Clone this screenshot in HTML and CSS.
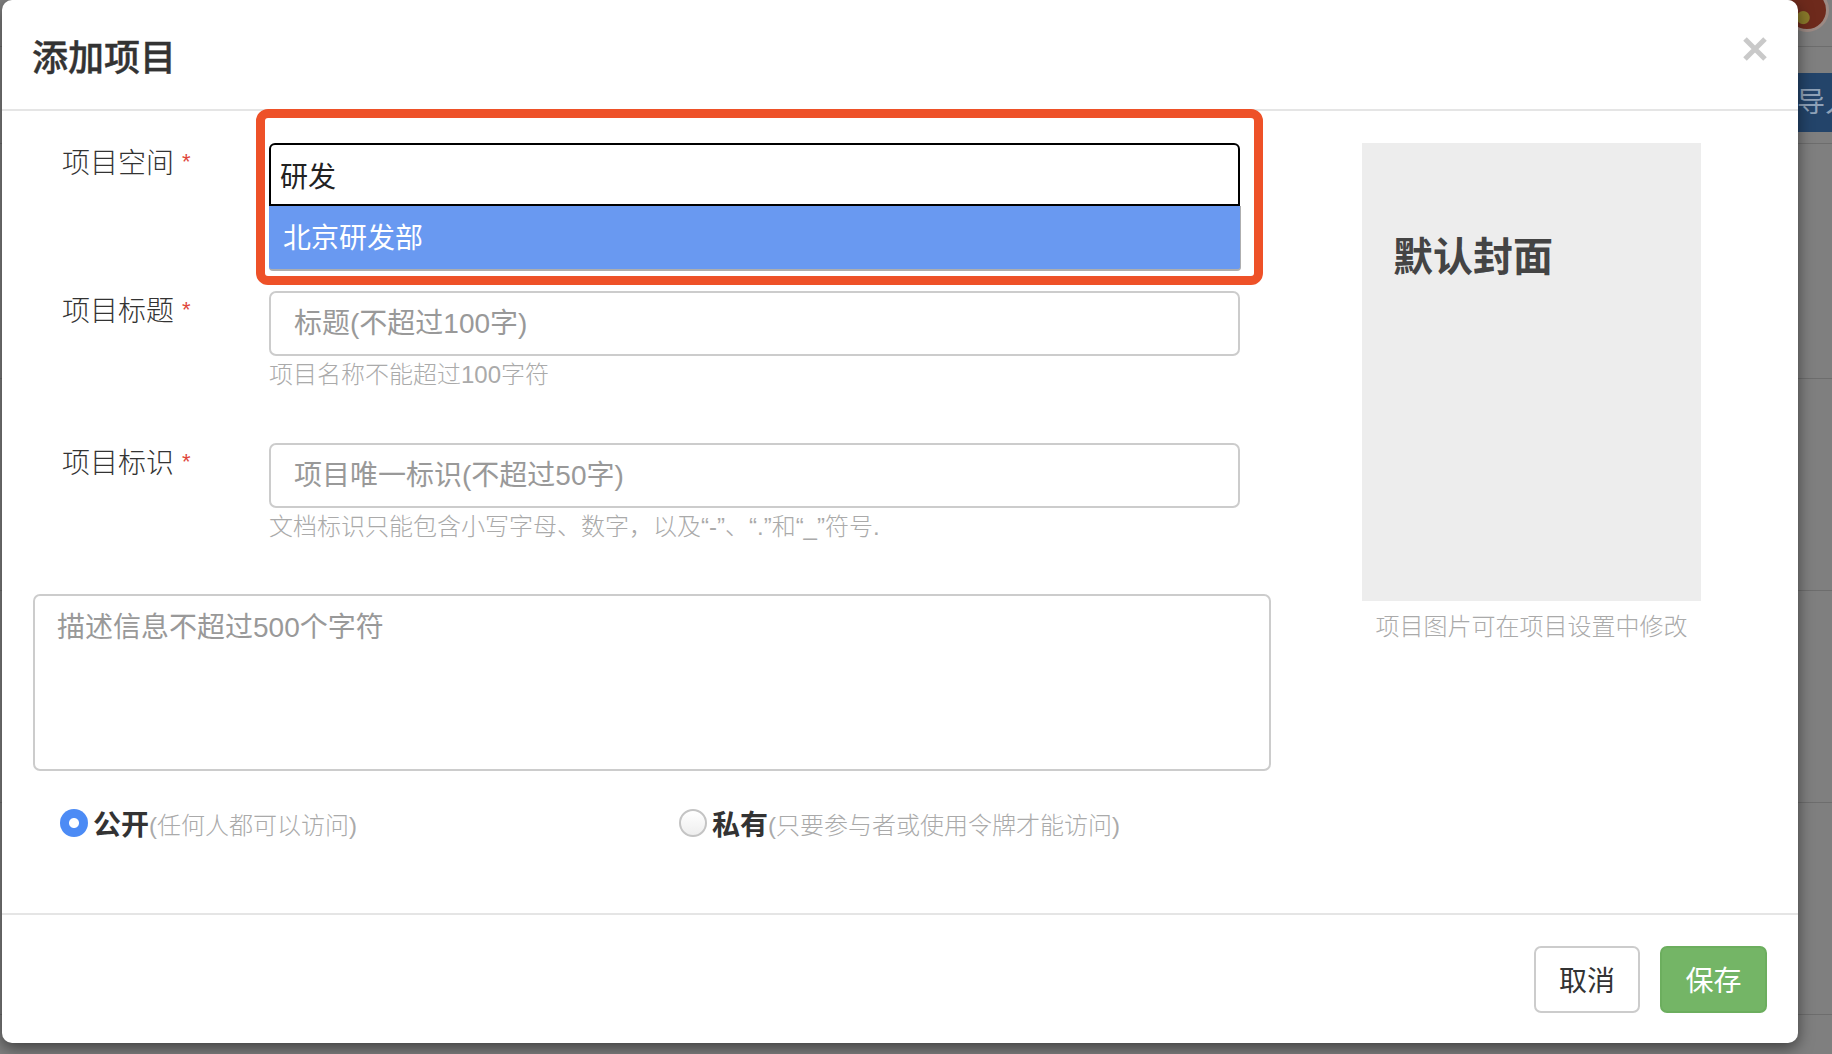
FILE: index.html
```html
<!DOCTYPE html>
<html lang="zh-CN">

<head>
  <meta charset="UTF-8" />
  <meta name="viewport" content="width=device-width, initial-scale=1.0" />
  <title>添加项目</title>
  <link rel="stylesheet" href="styles.css">
</head>

<body>
  <!-- 背景页面（被遮罩盖住） -->
  <div class="page">
    <div class="topbar">
      <span class="avatar"></span>
    </div>
    <div class="toolbar">
      <span class="import-btn">导入</span>
    </div>
    <div class="list">
      <div class="list-row first"></div>
      <div class="list-row"></div>
      <div class="list-row"></div>
      <div class="list-row"></div>
    </div>
  </div>

  <div class="modal">
    <div class="modal-header">
      <h4 class="modal-title">添加项目</h4>
      <button class="close" type="button">
        <svg width="24" height="24" viewBox="0 0 24 24">
          <path d="M2 2 L22 22 M22 2 L2 22" stroke="#c9c9c9" stroke-width="5" fill="none" />
        </svg>
      </button>
    </div>

    <div class="modal-body">
      <div class="form-col">
        <div class="form-row">
          <label class="form-label">项目空间<span class="req">*</span></label>
          <div class="field">
            <div class="highlight"></div>
            <input class="input input-focus" type="text" value="研发" />
            <ul class="dropdown">
              <li class="active">北京研发部</li>
            </ul>
          </div>
        </div>

        <div class="form-row row-title">
          <label class="form-label">项目标题<span class="req">*</span></label>
          <div class="field">
            <input class="input" type="text" placeholder="标题(不超过100字)" />
            <p class="help">项目名称不能超过100字符</p>
          </div>
        </div>

        <div class="form-row row-ident">
          <label class="form-label">项目标识<span class="req">*</span></label>
          <div class="field">
            <input class="input" type="text" placeholder="项目唯一标识(不超过50字)" />
            <p class="help">文档标识只能包含小写字母、数字，以及“-”、“.”和“_”符号.</p>
          </div>
        </div>

        <textarea class="desc" placeholder="描述信息不超过500个字符"></textarea>

        <div class="radios">
          <label class="radio">
            <span class="radio-dot checked"></span>
            <b>公开</b><span class="radio-note">(任何人都可以访问)</span>
          </label>
          <label class="radio">
            <span class="radio-dot"></span>
            <b>私有</b><span class="radio-note">(只要参与者或使用令牌才能访问)</span>
          </label>
        </div>
      </div>

      <div class="cover-col">
        <div class="cover">默认封面</div>
        <p class="cover-tip">项目图片可在项目设置中修改</p>
      </div>
    </div>

    <div class="modal-footer">
      <button class="btn btn-default" type="button">取消</button>
      <button class="btn btn-success" type="button">保存</button>
    </div>
  </div>
</body>

</html>
```

FILE: styles.css
```css
html,
body {
  margin: 0;
  height: 100%;
  overflow: hidden;
}

body {
  position: relative;
  background: #7f7f7f;
  font-family: "Liberation Sans", "Noto Sans CJK SC", sans-serif;
  color: #333;
}

/* 背景页面 */
.page {
  display: flex;
  flex-direction: column;
}

.topbar {
  height: 47px;
  box-sizing: border-box;
  border-bottom: 1px solid #6d6d6d;
  display: flex;
  justify-content: flex-end;
  padding-right: 3px;
}

.avatar {
  width: 44px;
  height: 44px;
  margin-top: -12px;
  box-sizing: border-box;
  border-radius: 50%;
  border: 3px solid #9c8a84;
  background: radial-gradient(circle at 40% 70%, #8a7a2a 0 6px, #6e2a1c 7px);
}

.toolbar {
  display: flex;
  justify-content: flex-end;
  padding: 26px 0 11px;
  border-bottom: 1px solid #6d6d6d;
  overflow: hidden;
}

.import-btn {
  width: 130px;
  height: 59px;
  margin-right: -95px;
  padding-left: 6px;
  background: #23446a;
  color: #8fa2b8;
  font-size: 28px;
  line-height: 59px;
}

.list-row {
  height: 212px;
  box-sizing: border-box;
  border-bottom: 1px solid #6d6d6d;
}

.list-row.first {
  height: 235px;
}

/* 弹窗 */
.modal {
  position: absolute;
  left: 2px;
  top: 0;
  width: 1796px;
  height: 1043px;
  background: #fff;
  border-radius: 10px;
  box-shadow: 0 5px 15px rgba(0, 0, 0, 0.5);
  display: flex;
  flex-direction: column;
}

.modal-header {
  height: 111px;
  box-sizing: border-box;
  border-bottom: 2px solid #e5e5e5;
  padding: 0 31px 0 30px;
  display: flex;
  align-items: center;
  justify-content: space-between;
}

.modal-title {
  margin: 0;
  font-size: 36px;
  font-weight: 500;
  color: #333;
  -webkit-text-stroke: 0.4px #333;
}

.close {
  border: none;
  background: none;
  padding: 0;
  margin-top: -12px;
  width: 24px;
  height: 24px;
  cursor: pointer;
}

.close svg {
  display: block;
}

.modal-body {
  flex: 1;
  display: flex;
  padding: 32px 0 0 31px;
}

.form-col {
  width: 1238px;
}

.form-row {
  display: grid;
  grid-template-columns: 236px 971px;
}

.row-title {
  margin-top: 20px;
}

.row-ident {
  margin-top: 51px;
}

.form-label {
  padding: 1px 0 0 29px;
  font-size: 28px;
  line-height: 40px;
  font-weight: 300;
  color: #333;
}

.req {
  color: #e0463c;
  font-size: 22px;
  margin-left: 8px;
  position: relative;
  top: -4px;
}

.field {
  position: relative;
}

/* 截图里的红色标注框 */
.highlight {
  position: absolute;
  left: -13px;
  top: -34px;
  width: 1007px;
  height: 176px;
  box-sizing: border-box;
  border: 9px solid #ee5128;
  border-radius: 12px;
  pointer-events: none;
}

.input {
  display: block;
  width: 100%;
  height: 65px;
  box-sizing: border-box;
  border: 2px solid #ccc;
  border-radius: 7px;
  padding: 0 23px;
  font-family: inherit;
  font-size: 28px;
  color: #333;
  outline: none;
}

.input::placeholder,
.desc::placeholder {
  color: #999;
}

.input-focus {
  height: 63px;
  border-color: #000;
  border-radius: 6px 6px 0 0;
  padding: 0 9px;
  color: #222;
}

.dropdown {
  list-style: none;
  margin: 0;
  padding: 0;
  width: 972px;
}

.dropdown li {
  height: 65px;
  box-sizing: border-box;
  padding: 3px 0 0 14px;
  line-height: 60px;
  font-size: 28px;
  color: #fff;
  background: #6999f1;
  border-bottom: 2px solid #aeaeae;
  border-right: 1px solid #aeaeae;
  border-radius: 0 0 4px 4px;
}

.help {
  margin: 2px 0 0;
  font-size: 24px;
  line-height: 34px;
  color: #aaa;
  font-weight: 300;
}

.desc {
  display: block;
  margin-top: 50px;
  width: 1238px;
  height: 177px;
  box-sizing: border-box;
  border: 2px solid #ccc;
  border-radius: 7px;
  padding: 12px 22px;
  font-family: inherit;
  font-size: 28px;
  line-height: 40px;
  resize: none;
  outline: none;
}

.radios {
  display: grid;
  grid-template-columns: 619px 619px;
  margin-top: 32px;
}

.radio {
  display: flex;
  align-items: center;
  padding-left: 27px;
  height: 40px;
}

.radio-dot {
  width: 28px;
  height: 28px;
  box-sizing: border-box;
  border-radius: 50%;
  border: 2px solid #c4c4c4;
  background: linear-gradient(#fff, #eee);
  margin-right: 5px;
  flex-shrink: 0;
}

.radio-dot.checked {
  border: none;
  background: radial-gradient(circle, #fff 0 4.5px, #4c8bf5 5.5px);
}

.radio b {
  font-size: 28px;
  color: #333;
}

.radio-note {
  font-size: 24px;
  color: #aaa;
  font-weight: 300;
}

.cover-col {
  margin-left: 91px;
  width: 339px;
}

.cover {
  height: 458px;
  box-sizing: border-box;
  background: #ededed;
  padding: 86px 0 0 31px;
  font-size: 40px;
  line-height: 56px;
  font-weight: bold;
  color: #444;
}

.cover-tip {
  margin: 9px 0 0;
  text-align: center;
  font-size: 24px;
  line-height: 34px;
  color: #aaa;
  font-weight: 300;
}

.modal-footer {
  height: 130px;
  box-sizing: border-box;
  border-top: 2px solid #e5e5e5;
  padding: 0 31px;
  display: flex;
  align-items: center;
  justify-content: flex-end;
  gap: 20px;
}

.btn {
  height: 67px;
  box-sizing: border-box;
  border-radius: 7px;
  font-family: inherit;
  font-size: 28px;
  cursor: pointer;
}

.btn-default {
  width: 106px;
  background: #fff;
  border: 2px solid #ccc;
  color: #333;
}

.btn-success {
  width: 107px;
  background: #74b566;
  border: 2px solid #6cae5e;
  color: #fff;
}
```
